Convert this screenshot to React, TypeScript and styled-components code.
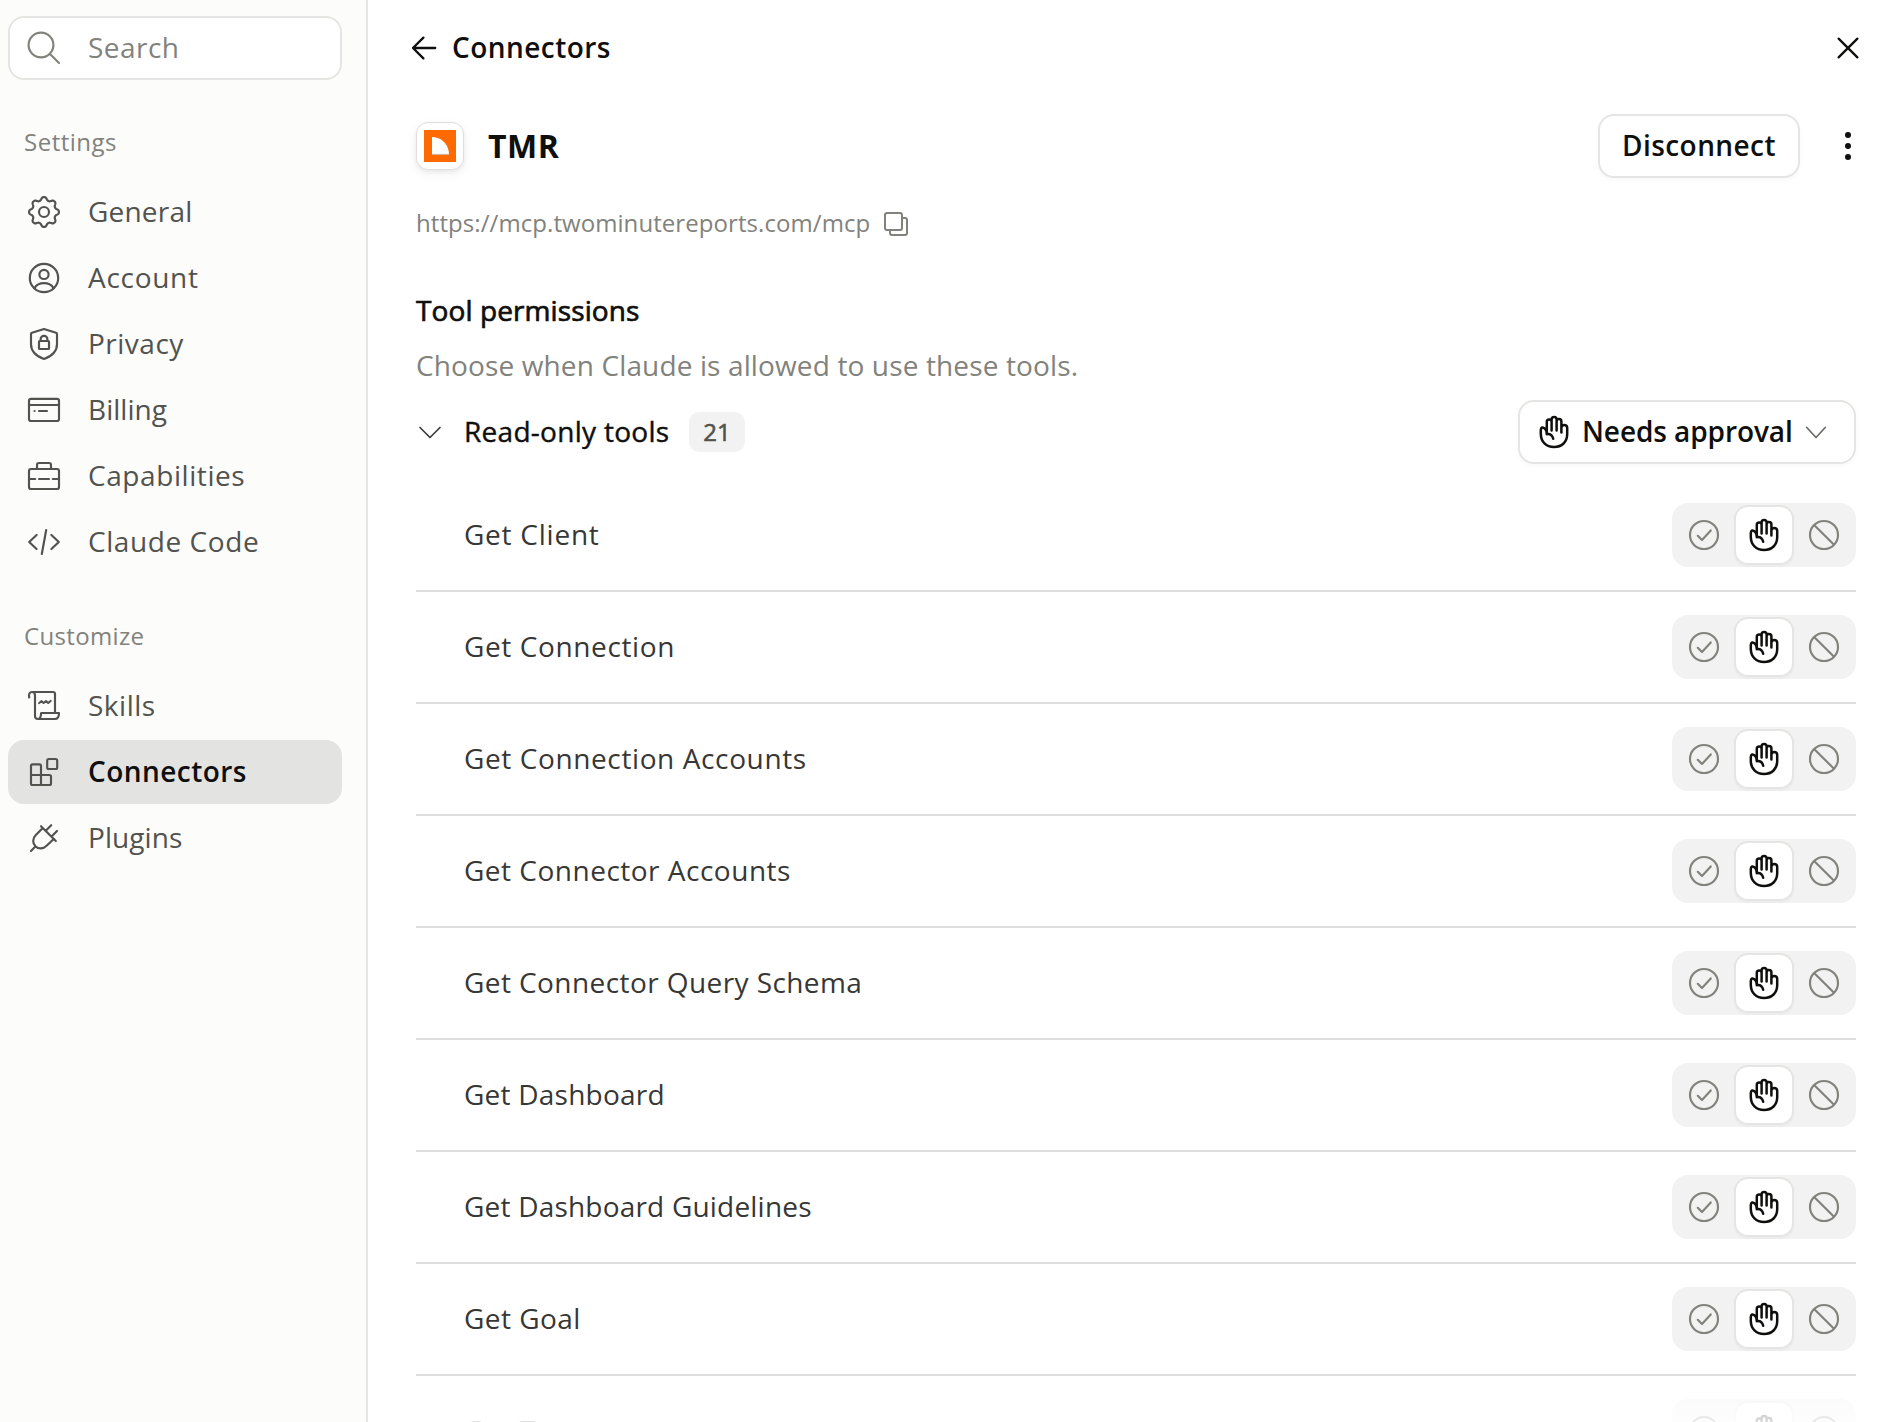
import React from "react";
import styled, { createGlobalStyle, css } from "styled-components";

const Global = createGlobalStyle`
  *, *::before, *::after { box-sizing: border-box; }
  html, body { margin: 0; padding: 0; overflow: hidden; background: #fff; }
  button { font: inherit; color: inherit; background: none; border: 0; padding: 0; }
  svg { display: block; flex: none; }
`;

const Page = styled.div`
  display: flex;
  width: 100%;
  height: 100vh;
  overflow: hidden;
  position: relative;
  font-family: "Open Sans", "Noto Sans", sans-serif;
  font-size: 28px;
  line-height: 40px;
  color: #0f0f0e;
`;

const Text = styled.span<{ $ls?: number }>`
  display: block;
  padding-bottom: 2px;
  white-space: nowrap;
  letter-spacing: ${(p) => p.$ls ?? 0}px;
`;

const Sidebar = styled.aside`
  width: 368px;
  flex: none;
  padding: 16px 24px 0 8px;
  background: #fcfcfa;
  border-right: 2px solid #e5e5e3;
`;

const itemLayout = css`
  display: flex;
  align-items: center;
  gap: 24px;
  width: 334px;
  height: 64px;
  border-radius: 16px;
`;

const SearchBox = styled.div`
  ${itemLayout}
  padding: 0 14px;
  border: 2px solid #e5e5e3;
  background: #fff;
  color: #82827d;
`;

const GroupLabel = styled.h3<{ $top: number }>`
  margin: ${(p) => p.$top}px 0 0;
  padding-left: 16px;
  height: 36px;
  font-size: 24px;
  line-height: 36px;
  font-weight: 400;
  color: #82827d;
`;

const NavList = styled.nav<{ $top: number }>`
  display: flex;
  flex-direction: column;
  gap: 2px;
  margin-top: ${(p) => p.$top}px;
`;

const NavItem = styled.a<{ $active?: boolean }>`
  ${itemLayout}
  padding: 0 16px;
  color: ${(p) => (p.$active ? "#0f0f0e" : "#52524f")};
  background: ${(p) => (p.$active ? "#e3e3e1" : "transparent")};
  font-weight: ${(p) => (p.$active ? 600 : 400)};
  svg { color: #52524f; }
`;

const Main = styled.main`
  flex: 1;
  min-width: 0;
  padding: 0 38px 0 48px;
`;

const Bar = styled.header`
  display: flex;
  align-items: center;
  height: 96px;
  margin: 0 -12px 0 -12px;
  font-weight: 600;
`;

const BackTitle = styled.div`
  display: flex;
  align-items: center;
  gap: 8px;
  flex: 1;
`;

const IconButton = styled.button`
  display: grid;
  place-items: center;
  width: 40px;
  height: 40px;
`;

const ConnectorHead = styled.section`
  display: flex;
  align-items: center;
  height: 64px;
  margin: 18px -12px 0 0;
`;

const LogoCard = styled.div`
  display: grid;
  place-items: center;
  width: 48px;
  height: 48px;
  border-radius: 12px;
  background: #fff;
  border: 1px solid #dededc;
  box-shadow: 0 4px 12px rgba(0, 0, 0, 0.06), 0 2px 4px rgba(0, 0, 0, 0.05);
`;

const ConnectorName = styled.h1`
  flex: 1;
  margin: 0 0 0 24px;
  font-size: 32px;
  font-weight: 700;
  letter-spacing: 0.5px;
`;

const Outlined = styled.button`
  display: flex;
  align-items: center;
  justify-content: center;
  height: 64px;
  border-radius: 16px;
  border: 2px solid #e5e5e3;
  background: #fff;
  font-weight: 600;
  box-shadow: 0 2px 4px rgba(0, 0, 0, 0.03);
`;

const DisconnectButton = styled(Outlined)`
  width: 202px;
  margin-right: 28px;
`;

const UrlRow = styled.div`
  display: flex;
  align-items: center;
  gap: 10px;
  height: 36px;
  margin-top: 28px;
  font-size: 24px;
  color: #82827d;
`;

const SectionTitle = styled.h2`
  margin: 48px 0 0;
  height: 40px;
  font-size: 28px;
  line-height: 40px;
  font-weight: 400;
  -webkit-text-stroke: 0.7px currentColor;
`;

const SectionHint = styled.p`
  margin: 15px 0 0;
  height: 40px;
  color: #82827d;
`;

const GroupHead = styled.div`
  display: flex;
  align-items: center;
  height: 64px;
  margin-top: 15px;
`;

const GroupTitle = styled.div`
  display: flex;
  align-items: center;
  flex: 1;
  margin-left: -2px;
`;

const GroupName = styled.span`
  margin-left: 18px;
  width: 225px;
  -webkit-text-stroke: 0.4px currentColor;
`;

const Count = styled.span`
  display: grid;
  place-items: center;
  width: 56px;
  height: 40px;
  border-radius: 10px;
  background: #f2f2f2;
  color: #52524f;
  font-size: 24px;
  -webkit-text-stroke: 0.6px currentColor;
`;

const ApprovalSelect = styled(Outlined)`
  width: 338px;
  justify-content: flex-start;
  padding-left: 14px;
`;

const ApprovalLabel = styled.span`
  width: 208px;
  margin: 0 10px 0 8px;
`;

const ToolList = styled.div`
  margin-top: 16px;
`;

const ToolRow = styled.div`
  display: flex;
  align-items: center;
  justify-content: space-between;
  height: 112px;
  padding-left: 48px;
  border-bottom: 2px solid #dededc;
  color: #373735;
`;

const Segments = styled.div`
  display: grid;
  grid-template-columns: 60px 60px 60px;
  align-items: center;
  width: 184px;
  height: 64px;
  padding: 0 2px;
  border-radius: 16px;
  background: #f2f2f2;
`;

const Segment = styled.button<{ $on?: boolean }>`
  display: grid;
  place-items: center;
  width: 60px;
  height: 60px;
  border-radius: 14px;
  color: #82827d;
  ${(p) =>
    p.$on &&
    css`
      color: #0f0f0e;
      background: #fff;
      border: 2px solid #e5e5e3;
      box-shadow: 0 2px 3px rgba(0, 0, 0, 0.03);
    `}
`;

const BottomFade = styled.div`
  position: absolute;
  left: 368px;
  right: 0;
  bottom: 0;
  height: 42px;
  background: linear-gradient(to bottom, rgba(255, 255, 255, 0), rgba(255, 255, 255, 0.7) 18px, rgba(255, 255, 255, 0.85));
`;

const Icon = ({ size = 40, sw = 1.08, children }: { size?: number; sw?: number; children: React.ReactNode }) => (
  <svg
    width={size}
    height={size}
    viewBox="0 0 20 20"
    fill="none"
    stroke="currentColor"
    strokeWidth={sw}
    strokeLinecap="round"
    strokeLinejoin="round"
  >
    {children}
  </svg>
);

const SearchIcon = () => (
  <Icon>
    <circle cx="8.5" cy="8.5" r="6.2" />
    <path d="M13 13l4.500 4.500" />
  </Icon>
);

const gearPath = (() => {
  const pts: string[] = [];
  const n = 128;
  for (let i = 0; i <= n; i++) {
    const a = (i / n) * Math.PI * 2;
    const wave = Math.cos(8 * a);
    const r = 6.7 + 0.85 * Math.tanh(1.4 * wave);
    pts.push(`${(10 + r * Math.sin(a)).toFixed(2)} ${(10 - r * Math.cos(a)).toFixed(2)}`);
  }
  return "M" + pts.join("L") + "Z";
})();

const GeneralIcon = () => (
  <Icon>
    <path d={gearPath} />
    <circle cx="10" cy="10" r="2.5" />
  </Icon>
);

const AccountIcon = () => (
  <Icon>
    <circle cx="10" cy="10" r="7.1" />
    <circle cx="10" cy="8.2" r="2.3" />
    <path d="M5.2 15.1c1-1.7 2.8-2.5 4.8-2.5s3.8.8 4.8 2.5" />
  </Icon>
);

const PrivacyIcon = () => (
  <Icon>
    <path d="M10 2.5l6 1.9c.3.1.5.3.5.6v5.1c0 3.6-2.5 5.9-6.5 7.4-4-1.5-6.5-3.8-6.5-7.4V5c0-.3.2-.5.5-.6z" />
    <rect x="7.5" y="8.5" width="5" height="4" rx=".4" />
    <path d="M8.3 8.4V7.6a1.7 1.7 0 013.4 0v.8" />
  </Icon>
);

const BillingIcon = () => (
  <Icon>
    <rect x="2.5" y="4.4" width="15" height="11.1" rx="1" />
    <path d="M2.6 7.5h14.8M5.25 10.5h.05M7.5 10.5h4" />
  </Icon>
);

const CapabilitiesIcon = () => (
  <Icon>
    <rect x="2.5" y="6.5" width="15" height="10" rx="1" />
    <path d="M6.5 6.4V4.5a1 1 0 011-1h5a1 1 0 011 1v1.9M2.6 11.5h3M7.5 11.5h5M14.4 11.5h3" />
  </Icon>
);

const CodeIcon = () => (
  <Icon>
    <path d="M6.3 6.5L2.6 10l3.7 3.5M13.7 6.5l3.7 3.5-3.7 3.5M11.1 4L8.9 16" />
  </Icon>
);

const SkillsIcon = () => (
  <Icon>
    <path d="M2.6 5.7c-.4-1.7.2-2.7 1.4-2.7h10.5a1 1 0 011 1v9M4 3c1 0 1.5.8 1.5 1.7v10.3a1.5 1.5 0 001.5 1.5M7 16.500h8.500c1.300 0 2-1 2-3H8.600c-.2 1-.1 3-1.600 3" />
    <path d="M7.6 8.5l1.2-.9 1 .9 1.2-.9 1.1.9 1.2-1" />
  </Icon>
);

const ConnectorsIcon = () => (
  <Icon>
    <path d="M3.5 11.5V7a.8.8 0 01.8-.8h3.4a.8.8 0 01.8.8v4.5M3.5 11.5v4.2a.8.8 0 00.8.8h8.400a.8.8 0 00.8-.8v-3.400a.8.8 0 00-.8-.8zM8.500 11.500v5" />
    <rect x="11.6" y="3.5" width="5" height="5" rx=".8" />
  </Icon>
);

const PluginsIcon = () => (
  <Icon>
    <path d="M8.5 4.1l7.4 7.4M9.4 5L5.9 8.5c-1.7 1.7-1.7 4.1-.2 5.6s3.9 1.5 5.6-.2l3.7-3.5M11 6.2l2.6-2.6M13.9 9.1l2.6-2.6M5.7 14.3l-2.2 2.2" />
  </Icon>
);

const HandIcon = () => (
  <Icon sw={1.25}>
    <path d="M6.4 11V4.9a1.2 1.2 0 012.4 0v4.4M8.8 9.3V3.7a1.25 1.25 0 012.5 0v5.6M11.3 9.3V4.7a1.2 1.2 0 012.4 0v5M13.7 10.3V7.9a1.45 1.45 0 012.9 0v3.100c0 4-2.700 6.500-6.600 6.500s-6.600-2.600-6.600-6.600V9.400c0-2.200 1.200-1.900 2-1.100.6.500 1 1.300 1 2.800 1.700-.3 2.700.4 3.200 2.300" />
  </Icon>
);

const CheckCircle = () => (
  <Icon>
    <circle cx="10" cy="10" r="7" />
    <path d="M6.9 10.4L9 12.5l4.4-4.8" />
  </Icon>
);

const Blocked = () => (
  <Icon>
    <circle cx="10" cy="10" r="7" />
    <path d="M5.2 5.1l9.7 9.7" />
  </Icon>
);

const BackIcon = () => (
  <Icon sw={1.15}>
    <path d="M15.6 10H4.5M9.7 4.8L4.5 10l5.2 5.2" />
  </Icon>
);

const CloseIcon = () => (
  <Icon sw={1.15}>
    <path d="M5.3 5.3l9.4 9.4M14.7 5.3l-9.4 9.4" />
  </Icon>
);

const DotsIcon = () => (
  <svg width="40" height="40" viewBox="0 0 40 40" fill="currentColor">
    <circle cx="20" cy="9" r="3" />
    <circle cx="20" cy="20" r="3" />
    <circle cx="20" cy="31" r="3" />
  </svg>
);

const ChevronIcon = ({ color, half }: { color: string; half: number }) => (
  <svg width="32" height="32" viewBox="0 0 32 32" fill="none" stroke={color} strokeWidth="1.7" strokeLinecap="round" strokeLinejoin="round">
    <path d={`M${16 - half} 11.5L16 21.5L${16 + half} 11.5`} />
  </svg>
);

const CopyIcon = () => (
  <svg width="32" height="32" viewBox="0 0 32 32" fill="none" stroke="currentColor" strokeWidth="2" strokeLinejoin="round">
    <rect x="5" y="5" width="17" height="17" rx="2" />
    <path d="M22 10h3a2 2 0 012 2v13a2 2 0 01-2 2H12a2 2 0 01-2-2v-3" />
  </svg>
);

const Logo = () => (
  <svg width="32" height="32" viewBox="0 0 32 32">
    <rect width="32" height="32" fill="#ff6a00" />
    <path d="M8 7A17.2 17.2 0 0125 24.2H8z" fill="#fff" />
    <path d="M8 24.3h17" stroke="#c3cad0" strokeWidth="0.8" />
  </svg>
);

const settings = [
  { label: "General", icon: <GeneralIcon />, ls: 0.2 },
  { label: "Account", icon: <AccountIcon />, ls: 0.7 },
  { label: "Privacy", icon: <PrivacyIcon />, ls: 0.5 },
  { label: "Billing", icon: <BillingIcon />, ls: 0.05 },
  { label: "Capabilities", icon: <CapabilitiesIcon />, ls: 0.58 },
  { label: "Claude Code", icon: <CodeIcon />, ls: 0.58 },
];

const customize = [
  { label: "Skills", icon: <SkillsIcon />, ls: 0.5, active: false },
  { label: "Connectors", icon: <ConnectorsIcon />, ls: 0.46, active: true },
  { label: "Plugins", icon: <PluginsIcon />, ls: 0.08, active: false },
];

const tools = [
  { name: "Get Client", ls: 0.76 },
  { name: "Get Connection", ls: 0.62 },
  { name: "Get Connection Accounts", ls: 0.61 },
  { name: "Get Connector Accounts", ls: 0.5 },
  { name: "Get Connector Query Schema", ls: 0.42 },
  { name: "Get Dashboard", ls: 0.23 },
  { name: "Get Dashboard Guidelines", ls: 0.2 },
  { name: "Get Goal", ls: 0.45 },
  { name: "Get Team", ls: 0.6 },
];

export default function App() {
  return (
    <Page>
      <Global />
      <Sidebar>
        <SearchBox>
          <SearchIcon />
          <Text $ls={0.45}>Search</Text>
        </SearchBox>
        <GroupLabel $top={44}>
          <Text $ls={0.5}>Settings</Text>
        </GroupLabel>
        <NavList $top={20}>
          {settings.map((s) => (
            <NavItem key={s.label}>
              {s.icon}
              <Text $ls={s.ls}>{s.label}</Text>
            </NavItem>
          ))}
        </NavList>
        <GroupLabel $top={44}>
          <Text $ls={0.35}>Customize</Text>
        </GroupLabel>
        <NavList $top={20}>
          {customize.map((s) => (
            <NavItem key={s.label} $active={s.active}>
              {s.icon}
              <Text $ls={s.ls}>{s.label}</Text>
            </NavItem>
          ))}
        </NavList>
      </Sidebar>
      <Main>
        <Bar>
          <BackTitle>
            <BackIcon />
            <Text $ls={0.45}>Connectors</Text>
          </BackTitle>
          <IconButton aria-label="Close">
            <CloseIcon />
          </IconButton>
        </Bar>
        <ConnectorHead>
          <LogoCard>
            <Logo />
          </LogoCard>
          <ConnectorName>TMR</ConnectorName>
          <DisconnectButton>
            <Text $ls={0.42}>Disconnect</Text>
          </DisconnectButton>
          <IconButton aria-label="More">
            <DotsIcon />
          </IconButton>
        </ConnectorHead>
        <UrlRow>
          <Text $ls={0.07}>https://mcp.twominutereports.com/mcp</Text>
          <CopyIcon />
        </UrlRow>
        <SectionTitle>
          <Text $ls={0.1}>Tool permissions</Text>
        </SectionTitle>
        <SectionHint>
          <Text $ls={0.13}>Choose when Claude is allowed to use these tools.</Text>
        </SectionHint>
        <GroupHead>
          <GroupTitle>
            <ChevronIcon color="#3d3d3a" half={10} />
            <GroupName>
              <Text $ls={0.28}>Read-only tools</Text>
            </GroupName>
            <Count>
              <Text>21</Text>
            </Count>
          </GroupTitle>
          <ApprovalSelect>
            <HandIcon />
            <ApprovalLabel>
              <Text $ls={-0.08}>Needs approval</Text>
            </ApprovalLabel>
            <ChevronIcon color="#6b6b67" half={9.2} />
          </ApprovalSelect>
        </GroupHead>
        <ToolList>
          {tools.map((t) => (
            <ToolRow key={t.name}>
              <Text $ls={t.ls}>{t.name}</Text>
              <Segments>
                <Segment aria-label="Allow">
                  <CheckCircle />
                </Segment>
                <Segment $on aria-label="Needs approval">
                  <HandIcon />
                </Segment>
                <Segment aria-label="Block">
                  <Blocked />
                </Segment>
              </Segments>
            </ToolRow>
          ))}
        </ToolList>
      </Main>
      <BottomFade />
    </Page>
  );
}
